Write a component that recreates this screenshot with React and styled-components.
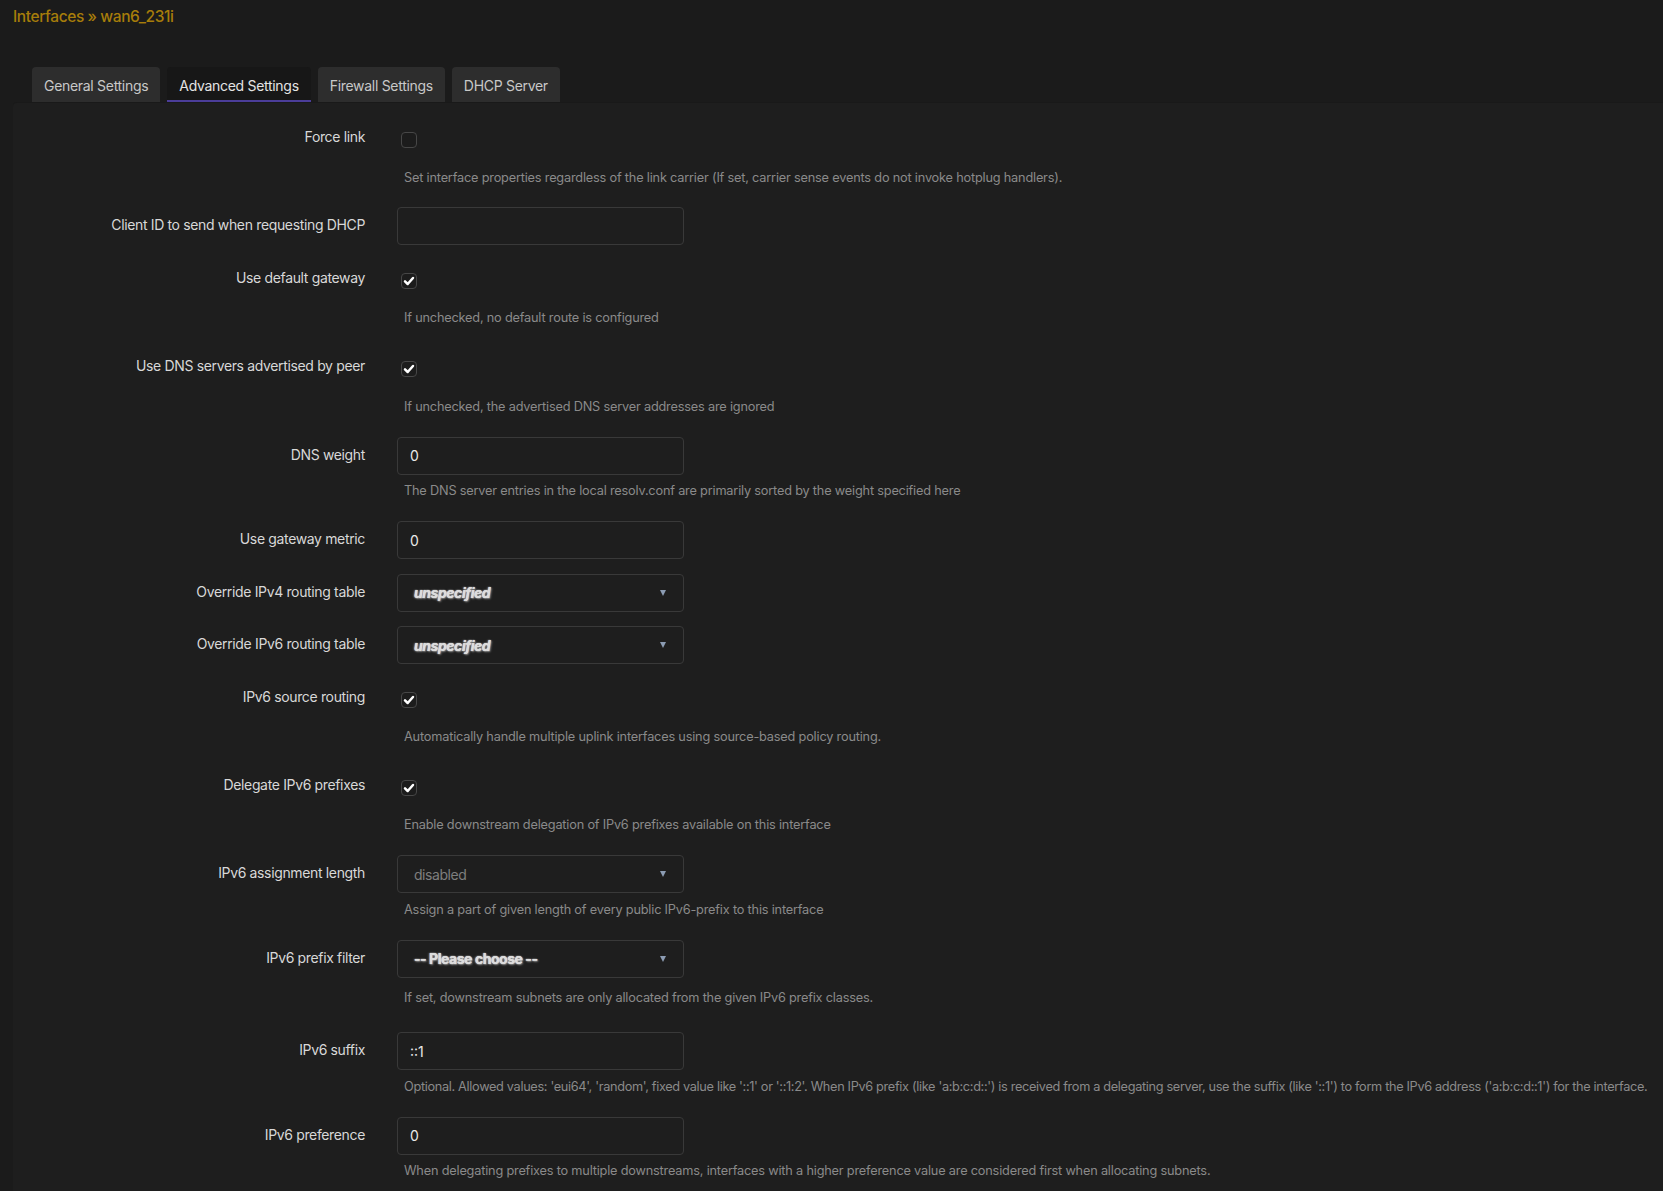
import React from 'react';
import styled, { createGlobalStyle } from 'styled-components';

const Global = createGlobalStyle`
  html, body { margin: 0; padding: 0; background: #1b1b1b; }
  body { font-family: Inter, "Noto Sans", Roboto, sans-serif; color: #d6d6d6; overflow: hidden; }
  * { box-sizing: border-box; }
`;

const Page = styled.div`
  width: 1663px;
  height: 1191px;
  display: flex;
  flex-direction: column;
  background: #1b1b1b;
  overflow: hidden;
`;

const Title = styled.h2`
  flex-shrink: 0;
  margin: 0;
  padding: 6px 0 0 13px;
  height: 67px;
  font-size: 15.5px;
  line-height: 22px;
  font-weight: 500;
  color: #a77d0a;
  letter-spacing: -0.4px;
`;

const TabBar = styled.div`
  flex-shrink: 0;
  display: flex;
  gap: 7px;
  padding-left: 32px;
  height: 36px;
`;

const Tab = styled.div`
  height: 36px;
  padding: 3px 12px 0;
  display: flex;
  align-items: center;
  font-size: 14px;
  letter-spacing: -0.3px;
  color: ${p => (p.$active ? '#e4e4e4' : '#c8c8c8')};
  background: ${p => (p.$active ? '#171717' : '#2d2d2d')};
  border-radius: 4px 4px 0 0;
  border-bottom: 3px solid ${p => (p.$active ? '#4b3d99' : 'transparent')};
`;

const Panel = styled.div`
  flex: 1 0 auto;
  margin-left: 13px;
  background: #1e1e1e;
  border-radius: 4px 0 0 0;
  box-shadow: 0 -1px 0 #191919;
  padding-top: 16px;
  display: flex;
  flex-direction: column;
`;

const Row = styled.div`
  display: grid;
  grid-template-columns: 352px 1fr;
  column-gap: 32px;
  margin-bottom: 14.45px;
`;

const Label = styled.div`
  text-align: right;
  font-size: 14px;
  line-height: 20px;
  padding-top: 8px;
  color: #d8d8d8;
  letter-spacing: -0.35px;
`;

const Field = styled.div`
  display: flex;
  flex-direction: column;
`;

const CheckWrap = styled.div`
  height: 42px;
  display: flex;
  align-items: center;
  padding-left: 4px;
`;

const Box = styled.div`
  width: 16px;
  height: 16px;
  border: 1px solid #474747;
  border-radius: 4px;
  background: #1c1c1c;
  display: flex;
  align-items: center;
  justify-content: center;
`;

const Input = styled.div`
  width: 287px;
  height: 38px;
  border: 1px solid #393939;
  border-radius: 4px;
  background: #1e1e1e;
  display: flex;
  align-items: center;
  padding-left: 12px;
  font-size: 14px;
  color: #e8e8e8;
`;

const Select = styled(Input)`
  justify-content: space-between;
  padding-left: 16px;
  padding-right: 17px;
`;

const SelectText = styled.span`
  font-size: 14px;
  letter-spacing: -0.45px;
  font-weight: ${p => (p.$variant === 'disabled' ? 400 : 700)};
  font-style: ${p => (p.$variant === 'italic' ? 'italic' : 'normal')};
  color: ${p => (p.$variant === 'disabled' ? '#7e7e7e' : '#dcdcdc')};
  text-shadow: ${p =>
    p.$variant === 'disabled'
      ? 'none'
      : '0 0 1px #fff, 1px 1px 2px #8a8a8a, -1px 0 2px #6a6a6a'};
`;

const Arrow = styled.span`
  width: 0;
  height: 0;
  border-left: 3.5px solid transparent;
  border-right: 3.5px solid transparent;
  border-top: 6px solid #8c9cb3;
`;

const Desc = styled.div`
  height: ${p => p.$h || 32}px;
  display: flex;
  align-items: center;
  padding-left: 7px;
  font-size: 12.75px;
  color: #8a8a8a;
  letter-spacing: ${p => (p.$tight ? '-0.34px' : '-0.2px')};
  white-space: nowrap;
`;

const Check = () => (
  <svg width="12" height="12" viewBox="0 0 12 12">
    <path d="M2 6.3 L4.7 9 L10 3" fill="none" stroke="#fff" strokeWidth="2.5" strokeLinecap="round" strokeLinejoin="round" />
  </svg>
);

const rows = [
  { label: 'Force link', type: 'checkbox', checked: false, desc: 'Set interface properties regardless of the link carrier (If set, carrier sense events do not invoke hotplug handlers).' },
  { label: 'Client ID to send when requesting DHCP', type: 'input', value: '' },
  { label: 'Use default gateway', type: 'checkbox', checked: true, desc: 'If unchecked, no default route is configured' },
  { label: 'Use DNS servers advertised by peer', type: 'checkbox', checked: true, desc: 'If unchecked, the advertised DNS server addresses are ignored' },
  { label: 'DNS weight', type: 'input', value: '0', desc: 'The DNS server entries in the local resolv.conf are primarily sorted by the weight specified here' },
  { label: 'Use gateway metric', type: 'input', value: '0' },
  { label: 'Override IPv4 routing table', type: 'select', value: 'unspecified', variant: 'italic' },
  { label: 'Override IPv6 routing table', type: 'select', value: 'unspecified', variant: 'italic' },
  { label: 'IPv6 source routing', type: 'checkbox', checked: true, desc: 'Automatically handle multiple uplink interfaces using source-based policy routing.' },
  { label: 'Delegate IPv6 prefixes', type: 'checkbox', checked: true, desc: 'Enable downstream delegation of IPv6 prefixes available on this interface' },
  { label: 'IPv6 assignment length', type: 'select', value: 'disabled', variant: 'disabled', desc: 'Assign a part of given length of every public IPv6-prefix to this interface' },
  { label: 'IPv6 prefix filter', type: 'select', value: '-- Please choose --', variant: 'bold', desc: 'If set, downstream subnets are only allocated from the given IPv6 prefix classes.', descH: 40 },
  { label: 'IPv6 suffix', type: 'input', value: '::1', tight: true, desc: "Optional. Allowed values: 'eui64', 'random', fixed value like '::1' or '::1:2'. When IPv6 prefix (like 'a:b:c:d::') is received from a delegating server, use the suffix (like '::1') to form the IPv6 address ('a:b:c:d::1') for the interface." },
  { label: 'IPv6 preference', type: 'input', value: '0', desc: 'When delegating prefixes to multiple downstreams, interfaces with a higher preference value are considered first when allocating subnets.' },
];

const Control = ({ row }) => {
  if (row.type === 'checkbox') {
    return (
      <CheckWrap>
        <Box>{row.checked && <Check />}</Box>
      </CheckWrap>
    );
  }
  if (row.type === 'select') {
    return (
      <Select>
        <SelectText $variant={row.variant}>{row.value}</SelectText>
        <Arrow />
      </Select>
    );
  }
  return <Input>{row.value}</Input>;
};

const tabs = [
  { name: 'General Settings' },
  { name: 'Advanced Settings', active: true },
  { name: 'Firewall Settings' },
  { name: 'DHCP Server' },
];

export default function App() {
  return (
    <Page>
      <Global />
      <Title>Interfaces » wan6_231i</Title>
      <TabBar>
        {tabs.map(t => (
          <Tab key={t.name} $active={t.active}>{t.name}</Tab>
        ))}
      </TabBar>
      <Panel>
        {rows.map(r => (
          <Row key={r.label}>
            <Label>{r.label}</Label>
            <Field>
              <Control row={r} />
              {r.desc && <Desc $h={r.descH} $tight={r.tight}>{r.desc}</Desc>}
            </Field>
          </Row>
        ))}
      </Panel>
    </Page>
  );
}
